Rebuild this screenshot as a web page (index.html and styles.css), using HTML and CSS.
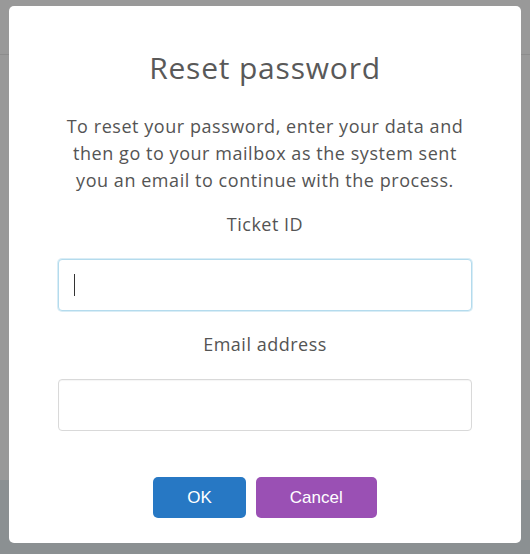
FILE: index.html
```html
<!DOCTYPE html>
<html lang="en">
<head>
<meta charset="utf-8">
<title>Reset password</title>
<link rel="stylesheet" href="styles.css">
</head>
<body>
<div class="bg-page">
  <header class="bg-header"></header>
  <main class="bg-main"></main>
  <footer class="bg-footer"></footer>
</div>
<div class="overlay">
  <div class="modal" role="dialog" aria-labelledby="title">
    <h2 class="modal-title" id="title">Reset password</h2>
    <p class="modal-text">To reset your password, enter your data and then go to your mailbox as the system sent you an email to continue with the process.</p>
    <label class="field-label" for="ticket">Ticket ID</label>
    <div class="field field-focused">
      <input class="field-input" id="ticket" type="text">
      <span class="caret"></span>
    </div>
    <label class="field-label field-label-2" for="email">Email address</label>
    <div class="field">
      <input class="field-input" id="email" type="email">
    </div>
    <div class="actions">
      <button class="btn btn-ok" type="button">OK</button>
      <button class="btn btn-cancel" type="button">Cancel</button>
    </div>
  </div>
</div>
</body>
</html>
```
FILE: styles.css
```css
html, body {
  margin: 0;
  padding: 0;
  height: 100%;
}
body {
  font-family: "Open Sans", "Liberation Sans", sans-serif;
  overflow: hidden;
}
.bg-page {
  display: flex;
  flex-direction: column;
  height: 554px;
  background: #ffffff;
}
.bg-header {
  height: 54px;
  border-bottom: 1px solid #eaeaea;
}
.bg-main {
  flex: 1;
}
.bg-footer {
  height: 74px;
  background: #e8f0f3;
}
.overlay {
  position: fixed;
  inset: 0;
  background: rgba(0, 0, 0, 0.4);
  display: flex;
  justify-content: center;
  align-items: flex-start;
  padding-top: 6px;
}
.modal {
  width: 512px;
  box-sizing: border-box;
  background: #fff;
  border-radius: 5px;
  padding: 44px 49px 25px;
  display: flex;
  flex-direction: column;
  align-items: stretch;
  text-align: center;
  color: #545454;
}
.modal-title {
  margin: 0;
  font-size: 30px;
  line-height: 36px;
  font-weight: 400;
  letter-spacing: 0.8px;
  color: #595959;
}
.modal-text {
  margin: 27px 0 0;
  font-size: 18px;
  line-height: 27px;
  letter-spacing: 0.55px;
}
.field-label {
  display: block;
  margin-top: 17px;
  font-size: 18px;
  line-height: 27px;
  letter-spacing: 0.5px;
}
.field-label-2 {
  margin-top: 20px;
}
.field {
  position: relative;
  margin-top: 21px;
  height: 52px;
}
.field-input {
  box-sizing: border-box;
  width: 100%;
  height: 52px;
  margin: 0;
  padding: 0 16px;
  border: 1px solid #d9d9d9;
  border-radius: 4px;
  background: #fff;
  font: inherit;
  font-size: 18px;
  color: #545454;
  outline: none;
  caret-color: transparent;
  box-shadow: inset 0 1px 1px rgba(0, 0, 0, 0.04);
}
.field-focused .field-input {
  border-color: #b4dbed;
  box-shadow: 0 0 0 1px rgba(180, 219, 237, 0.5);
}
.caret {
  position: absolute;
  left: 16px;
  top: 15px;
  width: 1px;
  height: 22px;
  background: #333;
}
.actions {
  display: flex;
  justify-content: center;
  gap: 10px;
  margin-top: 46px;
}
.btn {
  height: 41px;
  padding: 0 34px;
  border: 0;
  border-radius: 5px;
  font-family: "Liberation Sans", Arial, sans-serif;
  font-size: 17px;
  color: #fff;
  cursor: pointer;
}
.btn-ok {
  background: #2778c4;
}
.btn-cancel {
  background: #9a50b4;
}
```
